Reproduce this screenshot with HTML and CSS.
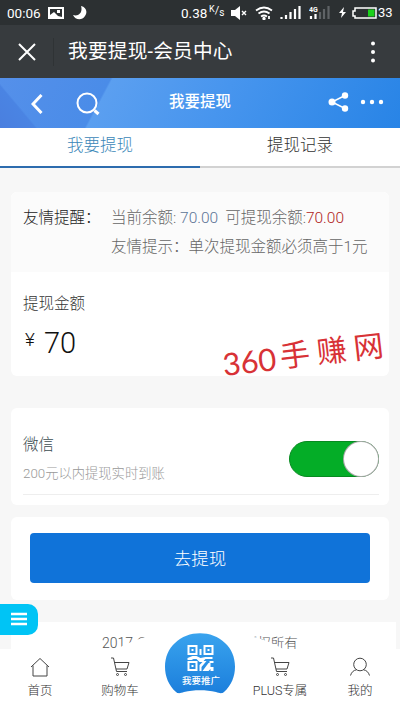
FILE: index.html
```html
<!DOCTYPE html>
<html lang="zh-CN">
<head>
<meta charset="utf-8">
<title>我要提现-会员中心</title>
<link rel="stylesheet" href="styles.css">
</head>
<body>
<div class="phone">
  <div class="status">
    <span class="time">00:06</span>
    <svg class="pic" width="16" height="14" viewBox="0 0 16 14"><path fill="#fff" fill-rule="evenodd" d="M0 1h16v12H0zM2 3v6l4-3 4 4 4 1V3zM9 4h3v3H9z"/></svg>
    <svg class="moon" width="14" height="14" viewBox="0 0 14 14"><path fill="#fff" d="M8 0c5 1 7 6 4 10-3 5-10 4-12-1 6 2 10-3 8-9z"/></svg>
    <span class="speed">0.38</span>
    <span class="unit"><i class="k">K</i>/<i class="s">s</i></span>
    <svg class="mute" width="16" height="14" viewBox="0 0 16 14"><path fill="#fff" d="M0 4h4l5-4v14l-5-4H0z"/><path stroke="#fff" stroke-width="1.4" d="m11 5 4 4m0-4-4 4"/></svg>
    <svg class="wifi" width="18" height="14" viewBox="0 0 18 14" fill="none" stroke="#fff" stroke-width="1.8"><path d="M1 4.500q8-6 16 0M3.500 7.500q5.500-4 11 0M6 10.500q3-2 6 0"/><circle cx="9" cy="12.500" r=".8"/><path d="M14 10v3"/></svg>
    <svg class="signal" width="21" height="14" viewBox="0 0 21 14" stroke="#fff" stroke-width="2.200"><path d="M1.500 13v-2M6 13V9M10.500 13V6M15 13V3M19.500 13V0"/></svg>
    <svg class="signal2" width="21" height="14" viewBox="0 0 21 14" stroke-width="2.200"><path stroke="#fff" d="M2 13v-3M6.500 13V8"/><path stroke="#5f6366" d="M11 13V6M15 13V3M19.500 13V0"/><text x="0" y="6" fill="#fff" stroke="none" font-size="7" font-weight="700">4G</text></svg>
    <svg class="bolt" width="7" height="11" viewBox="0 0 7 11"><path fill="#fff" d="M5 0 0 6h3L2 11l5-6H4z"/></svg>
    <svg class="battery" width="25" height="12" viewBox="0 0 25 12"><path fill="none" stroke="#fff" stroke-width="1.500" d="M3 1h21v10H3V9H1V4h2z"/><path fill="#1bd11b" d="M16 2.500h6.500v7H16z"/></svg>
    <span class="pct">33</span>
  </div>
  <div class="titlebar">
    <svg class="close" width="18" height="18" viewBox="0 0 18 18"><path stroke="#fff" stroke-width="2" d="m1 1 16 16M17 1 1 17"/></svg>
    <span class="divider"></span>
    <h1>我要提现-会员中心</h1>
    <svg class="kebab" width="6" height="22" viewBox="0 0 6 22" fill="#fff"><circle cx="3" cy="2.500" r="2"/><circle cx="3" cy="11" r="2"/><circle cx="3" cy="19.500" r="2"/></svg>
  </div>
  <header class="head">
    <svg class="back" width="12" height="20" viewBox="0 0 12 20"><path fill="none" stroke="#fff" stroke-width="3" d="M10.500 1 2 10l8.500 9"/></svg>
    <svg class="search" width="24" height="24" viewBox="0 0 24 24" fill="none" stroke="#fff" stroke-width="2"><circle cx="11" cy="11" r="9.500"/><path stroke-width="3" d="m18.500 18.500 4 3.500"/></svg>
    <h2>我要提现</h2>
    <svg class="share" width="21" height="20" viewBox="0 0 21 20"><path fill="none" stroke="#fff" stroke-width="1.500" d="M17 3.500 4 10l13 6.500"/><g fill="#fff"><circle cx="4" cy="10" r="3.500"/><circle cx="17" cy="3.500" r="3.200"/><circle cx="17" cy="16.500" r="3.200"/></g></svg>
    <svg class="more" width="24" height="6" viewBox="0 0 24 6" fill="#fff"><circle cx="3" cy="3" r="2.200"/><circle cx="12" cy="3" r="2.200"/><circle cx="21" cy="3" r="2.200"/></svg>
  </header>
  <nav class="tabs"><a class="on">我要提现</a><a>提现记录</a></nav>
  <main>
    <section class="card amount">
      <div class="notice">
        <span class="label">友情提醒：</span>
        <div class="info">
          <p>当前余额: <b class="bal">70.00</b><span class="gap"></span>可提现余额:<b class="red">70.00</b></p>
          <p>友情提示：单次提现金额必须高于1元</p>
        </div>
      </div>
      <p class="field">提现金额</p>
      <p class="money"><span>¥</span>70</p>
      <span class="mark"><span class="num">360</span><span>手</span><span>赚</span><span>网</span></span>
    </section>
    <section class="card method">
      <div class="row">
        <div><p class="name">微信</p><p class="sub">200元以内提现实时到账</p></div>
        <span class="switch"><i></i></span>
      </div>
    </section>
    <section class="card action"><button>去提现</button></section>
    <section class="copy"><span>2017 ©</span><span>版权所有</span></section>
  </main>
  <div class="side"><svg width="16" height="14" viewBox="0 0 16 14" stroke="#fff" stroke-width="2.400"><path d="M0 2h16M0 7h16M0 12h16"/></svg></div>
  <div class="hump"></div>
  <footer class="bar">
    <a><svg width="20" height="20" viewBox="0 0 20 20"><path d="M1 10 10 1.500 19 10M3 8.500V19h14V8.500"/></svg>首页</a>
    <a><svg width="20" height="20" viewBox="0 0 20 20"><path d="M1 1h2.500l3 13.500H17M4.500 5.500H19L17 12H6"/><circle cx="7.500" cy="17.500" r="1"/><circle cx="15.500" cy="17.500" r="1"/></svg>购物车</a>
    <a class="mid"></a>
    <a><svg width="20" height="20" viewBox="0 0 20 20"><path d="M1 1h2.500l3 13.500H17M4.500 5.500H19L17 12H6"/><circle cx="7.500" cy="17.500" r="1"/><circle cx="15.500" cy="17.500" r="1"/></svg>PLUS专属</a>
    <a><svg width="20" height="20" viewBox="0 0 20 20"><circle cx="10" cy="7.500" r="6.300"/><path d="M.5 18.500Q2 13.500 6.500 12.800M19.500 18.500Q18 13.500 13.500 12.800"/></svg>我的</a>
  </footer>
  <div class="promo">
    <svg class="disc" width="70" height="62" viewBox="0 0 70 62"><defs><linearGradient id="g" x2="0" y2="1"><stop stop-color="#39a3ee"/><stop offset="1" stop-color="#1c7fdc"/></linearGradient></defs><path fill="url(#g)" d="M11 59C-4 46-3 21 10 10 23-3 47-3 60 10c13 11 14 36-1 49-2 2-5 1-8 0-10-2.500-22-2.500-32 0-3 1-6 2-8 0z"/>
    <g transform="translate(22.500 12)" fill="none" stroke="#fff" stroke-width="2"><path d="M1 1h8v8H1zM17 1h8v8h-8zM1 17h8v8H1z"/><path fill="#fff" stroke="none" d="M4 4h2v2H4zM20 4h2v2h-2zM4 20h2v2H4zM12 4h2v6h-2zM0 13l5-2h4l4 2 5-1h7v2h-7l-3 3h-3l-3-3H6l-2 1H0zM12 20l4-4h3l-5 6v4h-2zM15 26l6-8h2v4h3v4h-3v-2l-2 2zM22 16h4v2h-4z"/></g></svg>
    <span>我要推广</span>
  </div>
</div>
</body>
</html>
```
FILE: styles.css
```css
*{box-sizing:border-box;margin:0;padding:0}
body{font-family:Roboto,"Noto Sans CJK SC",sans-serif;font-weight:300;color:#333;background:#f7f7f7}
i,b{font-style:normal;font-weight:inherit}
svg{display:block;flex:none}
.phone{position:relative;width:400px;height:711px;overflow:hidden;background:#f7f7f7}
.status{height:25px;background:#2c3032;color:#fff;display:flex;align-items:center;padding-left:7px;font-size:13.500px;font-weight:400}
.time{width:34px}.pic{margin-left:7px}.moon{margin-left:9px}
.speed{margin-left:94px;width:28px;font-size:13.500px}
.unit{width:16px;font-size:11px;white-space:nowrap;display:flex}
.k{font-size:9px;line-height:10px}.s{font-size:10px;line-height:17px}
.mute{margin-left:6px}.wifi{margin-left:8px}.signal{margin-left:7px}.signal2{margin-left:8px}.bolt{margin-left:9px}.battery{margin-left:6px}.pct{margin-left:1px;font-size:13px}
.titlebar{height:53px;background:#373b3e;display:flex;align-items:center;color:#fff;padding-left:18px}
.divider{width:1px;height:28px;background:#2f3335;margin-left:17px;margin-right:14px}
h1{font-size:19.700px;font-weight:400;letter-spacing:.2px;line-height:28px;margin-top:1px}
.kebab{margin-left:auto;margin-right:24px}
.head{height:50px;display:flex;align-items:center;color:#fff;padding-left:31px;background:linear-gradient(50deg,#4a7fdf 0,#4a84e3 8%,transparent 8.500%),linear-gradient(118deg,#5590ea 0,#4a8ce8 26%,#5b9ff0 26.500%,#4795ee 55%,#2884e6 100%)}
.back{margin-top:1px}
.search{margin-left:33px;margin-top:2px}
h2{font-size:15.500px;font-weight:500;margin-left:69px;line-height:22px;margin-top:-2px}
.share{margin-left:97px;margin-top:-3px}.more{margin-left:11px;margin-top:-3px}
.tabs{height:40px;display:grid;grid-template-columns:1fr 1fr;background:#fff;font-size:16.500px;text-align:center;line-height:35px}
.tabs a{border-bottom:2px solid #d2d2d2;color:#333}
.tabs .on{border-color:#2d6cae;color:#3b87b8}
main{padding:24px 11px 0}
.card{background:#fff;border-radius:6px}
.amount{height:184px;position:relative}
.notice{height:80px;background:#fbfbfb;border-radius:6px 6px 0 0;display:flex;padding:12px 0 0 12px;font-size:15.500px;line-height:29px;white-space:nowrap}
.label{width:88px;color:#222}
.info{color:#666}.bal{color:#5c7496}.gap{display:inline-block;width:7px}.red{color:#b02222}
.field{padding:21px 12px 0;font-size:15.500px;line-height:22px}
.money{display:flex;padding:10px 0 0 14px;font-size:29px;line-height:36px;color:#111}
.money span{font-size:19px;line-height:29px;width:19px}
.mark{position:absolute;left:211px;top:143px;display:flex;align-items:center;font-size:30px;line-height:40px;color:#d83236;transform:rotate(-6.500deg);font-weight:400}
.mark span+span{margin-left:7px}
.mark .num+span{margin-left:4px}
.mark .num{font-family:Lato,sans-serif;font-size:31px}
.method{margin-top:32px;height:97px;padding:0 10px 0 12px}
.row{height:87px;border-bottom:1px solid #eee;display:flex;justify-content:space-between;padding-top:26px}
.name{font-size:15.500px;line-height:22px;color:#3c4c50}
.sub{font-size:13.300px;line-height:20px;margin-top:8px;color:#999}
.switch{width:90px;height:36px;border-radius:18px;background:#04ad27;border:1px solid #078a20;margin-top:7px;display:flex;justify-content:flex-end}
.switch i{width:34px;height:34px;border-radius:50%;background:#fff;box-shadow:0 0 0 1px #aaa}
.action{margin-top:12px;height:83px;padding:16px 19px}
button{display:block;width:340px;height:50px;border:0;border-radius:4px;background:#1073d9;color:#fff;font:300 17.500px Roboto,"Noto Sans CJK SC",sans-serif;padding-bottom:2px}
.copy{margin:22px -7px 0 0;height:90px;background:#fff;padding:11px 0 0 91px;font-size:14px;line-height:20px;color:#555;display:flex}
.copy span+span{margin-left:96px;font-size:13.500px}
.side{position:absolute;left:0;top:604px;width:38px;height:31px;background:#00c4f5;border-radius:0 10px 10px 0;padding:8px 0 0 11px}
.hump{position:absolute;left:93px;top:630px;width:214px;height:102px;border-radius:50%;background:#fff}
.bar{position:absolute;left:0;right:0;bottom:0;height:62px;background:#fff;display:grid;grid-template-columns:repeat(5,80px);font-size:12.500px;line-height:18px;color:#333}
.bar a{display:flex;flex-direction:column;align-items:center;padding-top:8px;gap:5px}
.bar svg{fill:none;stroke:#444;stroke-width:1}
.promo{position:absolute;left:165px;top:633px;width:70px;color:#fff}
.promo span{position:absolute;left:2px;right:0;top:40px;text-align:center;font-size:9.500px;line-height:16px;font-weight:500}
```
